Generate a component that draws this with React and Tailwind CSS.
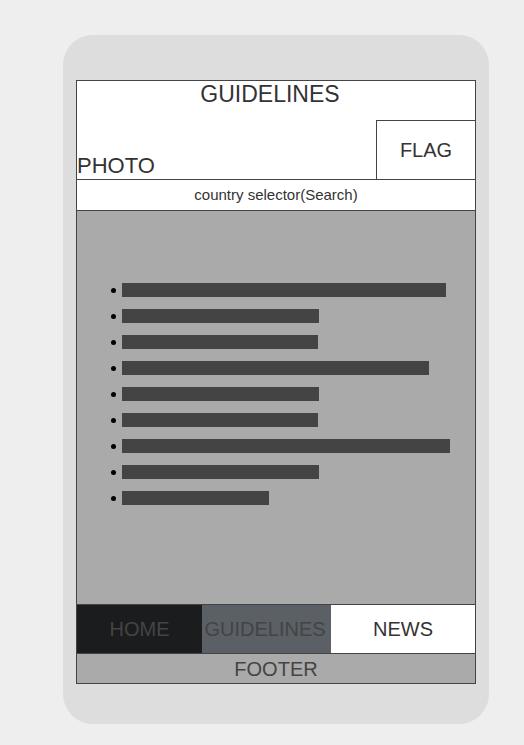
// App.jsx — mobile wireframe mockup (guidelines screen)
const bars = [324, 197, 196, 307, 197, 196, 328, 197, 147];

export default function App() {
  return (
    <div
      className="w-[524px] h-[745px] bg-[#eeeeee] pt-[35px] pl-[63px]"
      style={{ fontFamily: '"Liberation Sans", Arial, sans-serif' }}
    >
      <div className="w-[426px] h-[689px] rounded-[30px] bg-[#dddddd] pt-[45px] pl-[13px]">
        <div className="w-[400px] border border-[#444444] flex flex-col text-[#333333]">
          {/* header */}
          <div className="h-[99px] bg-white border-b border-[#444444] flex flex-col">
            <div className="text-center text-[23px] leading-[26px] pr-3">GUIDELINES</div>
            <div className="flex-1 flex items-end justify-between">
              <div className="text-[22px] leading-[25px] pb-[1px]">PHOTO</div>
              <div className="w-[99px] h-[59px] border-l border-t border-[#444444] flex items-center justify-center text-[20px] pb-[1px]">
                FLAG
              </div>
            </div>
          </div>

          {/* country selector */}
          <div className="h-[31px] bg-white border-b border-[#444444] flex items-center justify-center text-[15px]">
            country selector(Search)
          </div>

          {/* content */}
          <div className="h-[393px] bg-[#aaaaaa] pt-[72px]">
            <ul className="flex flex-col gap-[12px] pl-[34px]">
              {bars.map((w, i) => (
                <li key={i} className="flex items-center gap-[6px]">
                  <span className="w-[5px] h-[5px] rounded-full bg-black" />
                  <span className="h-[14px] bg-[#444444]" style={{ width: w }} />
                </li>
              ))}
            </ul>
          </div>

          {/* nav */}
          <div className="h-[50px] border-t border-b border-[#444444] flex text-[20px] leading-none">
            <div className="w-[125px] bg-[#1b1c1e] text-[#444444] flex items-center justify-center">HOME</div>
            <div className="w-[129px] bg-[#5a6066] text-[#444444] flex items-center justify-center pr-[3px]">GUIDELINES</div>
            <div className="flex-1 bg-white text-[#333333] flex items-center justify-center">NEWS</div>
          </div>

          {/* footer */}
          <div className="h-[29px] bg-[#aaaaaa] flex items-center justify-center text-[20px] leading-none text-[#444444]">
            FOOTER
          </div>
        </div>
      </div>
    </div>
  );
}
